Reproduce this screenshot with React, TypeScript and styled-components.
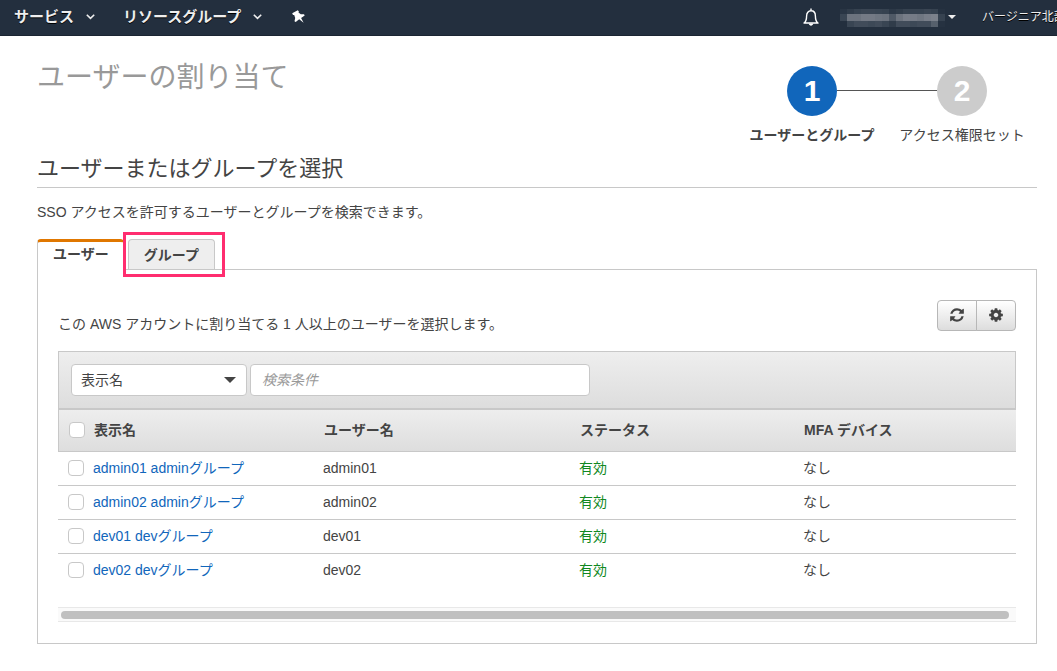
import React, { useState } from 'react';
import styled, { createGlobalStyle, css } from 'styled-components';

const line = '#c8c8c8';
const ink = '#444444';
const link = '#1166bb';

const GlobalStyle = createGlobalStyle`
  *, *::before, *::after { box-sizing: border-box; }
  body {
    margin: 0;
    background: #ffffff;
    color: ${ink};
    font-family: "Liberation Sans", "Noto Sans CJK JP", sans-serif;
    font-size: 14px;
    line-height: 20px;
  }
  h1, h2, p, ul, ol { margin: 0; padding: 0; }
  button, input, select { font: inherit; color: inherit; }
`;

const NavBar = styled.nav`
  display: flex;
  align-items: center;
  height: 36px;
  padding-left: 14px;
  overflow: hidden;
  background: #232f3e;
  border-bottom: 1px solid #1b2532;
  white-space: nowrap;
`;

const NavButton = styled.button<{ $gap?: number }>`
  display: flex;
  align-items: center;
  flex: none;
  gap: 12px;
  margin: 0 ${p => p.$gap ?? 0}px 0 0;
  padding: 0 0 2px;
  border: 0;
  background: none;
  color: #eeeeee;
  font-size: 15px;
  font-weight: 700;
  text-shadow: 0 1px 0 #000000;
`;

const AccountButton = styled(NavButton)`
  gap: 3px;
`;

const NavSpacer = styled.div`
  flex: 1;
`;

const Region = styled(NavButton)`
  display: block;
  width: 75px;
  overflow: hidden;
  font-size: 12px;
  font-weight: 400;
  text-align: left;
`;

const Main = styled.main`
  padding: 20px 20px 27px 37px;
`;

const PageHeader = styled.header`
  display: flex;
  justify-content: space-between;
  align-items: flex-start;
`;

const Title = styled.h1`
  padding-top: 4px;
  color: #999999;
  font-size: 28px;
  font-weight: 400;
  line-height: 36px;
`;

const Steps = styled.ol`
  display: flex;
  padding-top: 10px;
  list-style: none;
`;

const Step = styled.li<{ $active?: boolean }>`
  width: 150px;
  text-align: center;
  font-weight: ${p => (p.$active ? 700 : 400)};
  white-space: nowrap;
`;

const StepTrack = styled.div`
  display: flex;
  align-items: center;
  margin-bottom: 9px;
`;

const Segment = styled.span<{ $drawn?: boolean }>`
  flex: 1;
  height: 2px;
  border-top: 1px solid ${p => (p.$drawn ? '#555555' : 'transparent')};
`;

const StepCircle = styled.span<{ $active?: boolean }>`
  width: 50px;
  height: 50px;
  border-radius: 50%;
  background: ${p => (p.$active ? '#1166bb' : '#cccccc')};
  color: #ffffff;
  font-size: 30px;
  font-weight: 700;
  line-height: 50px;
`;

const SectionTitle = styled.h2`
  margin-top: 9px;
  padding-bottom: 3px;
  border-bottom: 1px solid ${line};
  font-size: 22px;
  font-weight: 400;
  line-height: 30px;
`;

const Lead = styled.p`
  margin-top: 14px;
`;

const TabList = styled.div`
  display: flex;
  gap: 4px;
  margin-top: 17px;
`;

const Tab = styled.button<{ $active?: boolean }>`
  height: 30px;
  padding: 0 15px;
  border: 1px solid ${line};
  border-bottom: 0;
  border-radius: 4px 4px 0 0;
  background: #eeeeee;
  font-weight: 700;
  line-height: 20px;
  ${p =>
    p.$active &&
    css`
      position: relative;
      height: 31px;
      margin-bottom: -1px;
      padding-bottom: 4px;
      border-top: 3px solid #e07700;
      border-right: 0;
      background: #ffffff;
    `}
`;

const TabMarker = styled.div`
  position: relative;
  display: flex;
  &::after {
    content: '';
    position: absolute;
    inset: -7px -10px -8px -5px;
    border: 3px solid #ff2d6f;
    pointer-events: none;
  }
`;

const Panel = styled.section`
  padding: 30px 20px 21px;
  border: 1px solid ${line};
`;

const PanelHeader = styled.div`
  display: flex;
  justify-content: space-between;
  margin-bottom: 17px;
`;

const PanelText = styled.p`
  padding-top: 14px;
`;

const ButtonGroup = styled.div`
  display: flex;
`;

const IconButton = styled.button`
  display: flex;
  align-items: center;
  justify-content: center;
  width: 40px;
  height: 31px;
  padding: 0 0 2px;
  border: 1px solid #b7b7b7;
  background: linear-gradient(#ffffff, #dddddd);
  &:first-child { border-radius: 4px 0 0 4px; }
  &:last-child { margin-left: -1px; border-radius: 0 4px 4px 0; }
`;

const Toolbar = styled.div`
  display: flex;
  gap: 3px;
  padding: 12px;
  border: 1px solid ${line};
  background: linear-gradient(#eeeeee, #dddddd);
`;

const SelectBox = styled.div`
  display: grid;
  align-items: center;
  width: 176px;
  > * { grid-area: 1 / 1; }
  > svg { justify-self: end; margin-right: 11px; pointer-events: none; }
`;

const Select = styled.select`
  appearance: none;
  width: 100%;
  height: 32px;
  padding: 0 9px;
  border: 1px solid ${line};
  border-radius: 4px;
  background: #ffffff;
`;

const SearchInput = styled.input`
  width: 340px;
  height: 32px;
  padding: 0 11px;
  border: 1px solid ${line};
  border-radius: 4px;
  background: #ffffff;
  &::placeholder { color: #999999; font-style: italic; opacity: 1; }
`;

const Table = styled.table`
  width: 100%;
  table-layout: fixed;
  border-collapse: separate;
  border-spacing: 0;
  text-align: left;
`;

const HeadRow = styled.tr`
  height: 43px;
  background: linear-gradient(#eeeeee, #dddddd);
`;

const HeadCell = styled.th`
  padding: 0 0 2px 1px;
  border-top: 1px solid ${line};
  border-bottom: 1px solid ${line};
  &:first-child { padding-left: 10px; border-left: 1px solid ${line}; }
`;

const Row = styled.tr`
  height: 34px;
  &:last-child td { border-bottom-color: transparent; }
`;

const Cell = styled.td<{ $ok?: boolean }>`
  padding: 0 0 2px;
  border-bottom: 1px solid ${line};
  color: ${p => (p.$ok ? '#118822' : 'inherit')};
  &:first-child { padding-left: 10px; }
`;

const Checkbox = styled.input`
  appearance: none;
  display: block;
  width: 16px;
  height: 16px;
  margin: 0;
  border: 1px solid ${line};
  border-radius: 4px;
  background: #ffffff;
  &:checked { background: ${link}; }
`;

const NameLink = styled.a`
  color: ${link};
  text-decoration: none;
`;

const ScrollTrack = styled.div`
  margin-top: 19px;
  padding: 3px 7px 2px 3px;
  border-top: 1px solid #e8e8e8;
  border-bottom: 1px solid #e8e8e8;
  background: #fafafa;
`;

const ScrollThumb = styled.div`
  height: 8px;
  border-radius: 4px;
  background: #c0c0c0;
`;

const users = [
  { user: 'admin01', name: 'admin01 adminグループ' },
  { user: 'admin02', name: 'admin02 adminグループ' },
  { user: 'dev01', name: 'dev01 devグループ' },
  { user: 'dev02', name: 'dev02 devグループ' },
];

const Chevron = () => (
  <svg width="9" height="6" viewBox="0 0 9 6" fill="none" stroke="#eeeeee" strokeWidth="1.6" aria-hidden="true">
    <path d="M0.8 0.8 4.5 4.4 8.2 0.8" />
  </svg>
);

const Pin = () => (
  <svg width="13" height="13" viewBox="0 0 13 13" fill="#ffffff" aria-hidden="true">
    <path d="M.2 3.2 5.8.2l1.100 1.200-.4 1L8.800 4.200h3.200l.7 1.200-3.600 2.500 2.500 4.900L7.200 9.200 3.700 12l-1.200-.8.7-3.200L2.200 5H1z" />
  </svg>
);

const Bell = () => (
  <svg width="16" height="18" viewBox="0 0 16 18" fill="none" stroke="#ffffff" strokeWidth="1.4" aria-hidden="true">
    <path d="M8 .5v2M1 15c2.400-1.600 2.600-3.400 2.600-7C3.600 4.800 5.400 2.800 8 2.800s4.400 2 4.400 5.200c0 3.600.2 5.400 2.600 7z" strokeLinejoin="round" />
    <path d="M5.700 15.500h4.600c-.3 1.400-1.200 2.200-2.300 2.200s-2-.8-2.300-2.200z" fill="#ffffff" stroke="none" />
  </svg>
);

const mosaic = [
  {
    y: 2,
    height: 5,
    fills: ['#293544', '#303c4a', '#364250', '#3a4553', '#3a4553', '#384452', '#364250', '#2c3847', '#303c4a', '#364250', '#364250', '#364250', '#3a4553', '#364250', '#263241'],
  },
  {
    y: 7,
    height: 7,
    fills: ['#394553', '#6c737e', '#6c737e', '#747a85', '#747a85', '#6f7681', '#6c737e', '#4f5966', '#6c737e', '#777d88', '#757b86', '#6f7681', '#777d88', '#7b818b', '#364250'],
  },
  {
    y: 14,
    height: 6,
    fills: ['#232f3e', '#394553', '#414c5a', '#414c5a', '#3d4957', '#414c5a', '#394553', '#303c4a', '#414c5a', '#414c5a', '#3d4957', '#414c5a', '#414c5a', '#56606c', '#263241'],
  },
];

const HiddenAccount = () => (
  <svg width="105" height="20" viewBox="0 0 105 20" aria-hidden="true">
    {mosaic.map(({ y, height, fills }) =>
      fills.map((fill, x) => <rect key={`${x}-${y}`} x={x * 7} y={y} width="7" height={height} fill={fill} />)
    )}
  </svg>
);

const Caret = ({ color, width }: { color: string; width: number }) => (
  <svg width={width} height={width / 2} viewBox="0 0 10 5" fill={color} aria-hidden="true">
    <path d="M0 0h10L5 5z" />
  </svg>
);

const Refresh = () => (
  <svg width="16" height="16" viewBox="0 0 1792 1792" fill={ink} aria-hidden="true">
    <path d="M1639 1056q0 5-1 7-64 268-268 434.500t-478 166.500q-146 0-282.500-55t-243.500-157l-129 129q-19 19-45 19t-45-19-19-45v-448q0-26 19-45t45-19h448q26 0 45 19t19 45-19 45l-137 137q71 66 161 102t187 36q134 0 250-65t186-179q11-17 53-117 8-23 30-23h192q13 0 22.500 9.500t9.500 22.500zm25-800v448q0 26-19 45t-45 19h-448q-26 0-45-19t-19-45 19-45l138-138q-148-137-349-137-134 0-250 65t-186 179q-11 17-53 117-8 23-30 23h-199q-13 0-22.500-9.500t-9.500-22.500v-7q65-268 270-434.500t480-166.500q146 0 284 55.500t245 156.500l130-129q19-19 45-19t45 19 19 45z" />
  </svg>
);

const Gear = () => (
  <svg width="16" height="16" viewBox="0 0 1792 1792" fill={ink} aria-hidden="true">
    <path d="M1152 896q0-106-75-181t-181-75-181 75-75 181 75 181 181 75 181-75 75-181zm512-109v222q0 12-8 23t-20 13l-185 28q-19 54-39 91 35 50 107 138 10 12 10 25t-9 23q-27 37-99 108t-94 71q-12 0-26-9l-138-108q-44 23-91 38-16 136-29 186-7 28-36 28h-222q-14 0-24.500-8.500t-11.500-21.500l-28-184q-49-16-90-37l-141 107q-10 9-25 9-14 0-25-11-126-114-165-168-7-10-7-23 0-12 8-23 15-21 51-66.500t54-70.500q-27-50-41-99l-183-27q-13-2-21-12.500t-8-23.500v-222q0-12 8-23t19-13l186-28q14-46 39-92-40-57-107-138-10-12-10-24 0-10 9-23 26-36 98.500-107.500t94.500-71.500q13 0 26 10l138 107q44-23 91-38 16-136 29-186 7-28 36-28h222q14 0 24.500 8.500t11.500 21.500l28 184q49 16 90 37l142-107q9-9 24-9 13 0 25 10 129 119 165 170 7 8 7 22 0 12-8 23-15 21-51 66.500t-54 70.500q26 50 41 98l183 28q13 2 21 12.500t8 23.500z" />
  </svg>
);

export default function App() {
  const [selected, setSelected] = useState<string[]>([]);
  const toggle = (user: string) =>
    setSelected(s => (s.includes(user) ? s.filter(u => u !== user) : [...s, user]));
  const all = selected.length === users.length;

  return (
    <>
      <GlobalStyle />
      <NavBar>
        <NavButton $gap={28}>サービス <Chevron /></NavButton>
        <NavButton $gap={30}>リソースグループ <Chevron /></NavButton>
        <NavButton aria-label="ピン留め"><Pin /></NavButton>
        <NavSpacer />
        <NavButton $gap={21} aria-label="通知"><Bell /></NavButton>
        <AccountButton $gap={26} aria-label="アカウント"><HiddenAccount /><Caret color="#eeeeee" width={8} /></AccountButton>
        <Region>バージニア北部</Region>
      </NavBar>
      <Main>
        <PageHeader>
          <Title>ユーザーの割り当て</Title>
          <Steps>
            <Step $active>
              <StepTrack><Segment /><StepCircle $active>1</StepCircle><Segment $drawn /></StepTrack>
              ユーザーとグループ
            </Step>
            <Step>
              <StepTrack><Segment $drawn /><StepCircle>2</StepCircle><Segment /></StepTrack>
              アクセス権限セット
            </Step>
          </Steps>
        </PageHeader>
        <SectionTitle>ユーザーまたはグループを選択</SectionTitle>
        <Lead>SSO アクセスを許可するユーザーとグループを検索できます。</Lead>
        <TabList role="tablist">
          <Tab $active role="tab" aria-selected="true">ユーザー</Tab>
          <TabMarker><Tab role="tab" aria-selected="false">グループ</Tab></TabMarker>
        </TabList>
        <Panel>
          <PanelHeader>
            <PanelText>この AWS アカウントに割り当てる 1 人以上のユーザーを選択します。</PanelText>
            <ButtonGroup>
              <IconButton aria-label="更新"><Refresh /></IconButton>
              <IconButton aria-label="設定"><Gear /></IconButton>
            </ButtonGroup>
          </PanelHeader>
          <Toolbar>
            <SelectBox>
              <Select aria-label="検索項目">
                <option>表示名</option>
              </Select>
              <Caret color={ink} width={12} />
            </SelectBox>
            <SearchInput type="text" aria-label="検索条件" placeholder="検索条件" />
          </Toolbar>
          <Table>
            <colgroup>
              <col style={{ width: 35 }} />
              <col style={{ width: 230 }} />
              <col style={{ width: 256 }} />
              <col style={{ width: 224 }} />
              <col />
            </colgroup>
            <thead>
              <HeadRow>
                <HeadCell>
                  <Checkbox
                    type="checkbox"
                    aria-label="すべて選択"
                    checked={all}
                    onChange={() => setSelected(all ? [] : users.map(u => u.user))}
                  />
                </HeadCell>
                <HeadCell>表示名</HeadCell>
                <HeadCell>ユーザー名</HeadCell>
                <HeadCell>ステータス</HeadCell>
                <HeadCell>MFA デバイス</HeadCell>
              </HeadRow>
            </thead>
            <tbody>
              {users.map(({ user, name }) => (
                <Row key={user}>
                  <Cell>
                    <Checkbox type="checkbox" aria-label={name} checked={selected.includes(user)} onChange={() => toggle(user)} />
                  </Cell>
                  <Cell><NameLink href="#">{name}</NameLink></Cell>
                  <Cell>{user}</Cell>
                  <Cell $ok>有効</Cell>
                  <Cell>なし</Cell>
                </Row>
              ))}
            </tbody>
          </Table>
          <ScrollTrack><ScrollThumb /></ScrollTrack>
        </Panel>
      </Main>
    </>
  );
}
